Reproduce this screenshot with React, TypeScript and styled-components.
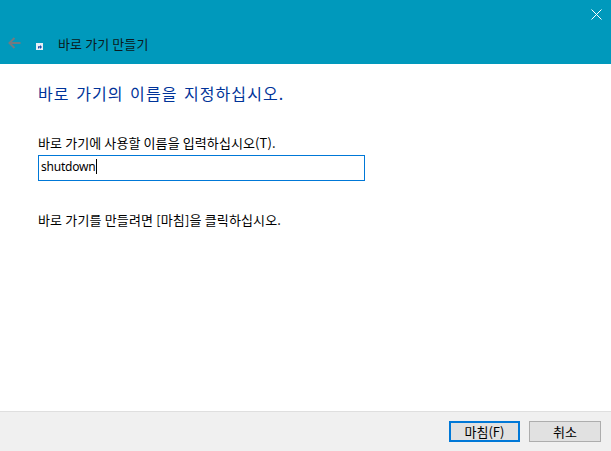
import { createGlobalStyle } from "styled-components";
import styled from "styled-components";

const GlobalStyle = createGlobalStyle`
  html, body {
    margin: 0;
    padding: 0;
    background: #ffffff;
  }
  * {
    box-sizing: border-box;
  }
`;

const Window = styled.div`
  width: 611px;
  height: 451px;
  display: flex;
  flex-direction: column;
  overflow: hidden;
  font-family: "Noto Sans CJK KR", "Liberation Sans", sans-serif;
  font-size: 13px;
  color: #000000;
  background: #ffffff;
`;

const TitleBar = styled.header`
  height: 64px;
  flex: none;
  display: flex;
  flex-direction: column;
  background: #0099bc;
`;

const CloseRow = styled.div`
  height: 30px;
  display: flex;
  justify-content: flex-end;
  padding: 9px 9px 0 0;
`;

const NavRow = styled.div`
  display: flex;
  align-items: center;
  height: 28px;
  padding-left: 8px;
`;

const BackIcon = styled.svg`
  width: 13px;
  height: 12px;
  margin-right: 15px;
  margin-bottom: 2px;
`;

const AppIcon = styled.svg`
  width: 7px;
  height: 7px;
  margin-top: 5px;
  margin-right: 15px;
`;

const TitleText = styled.span`
  font-size: 13px;
  line-height: 16px;
  letter-spacing: 0.1px;
  color: #0a1a20;
`;

const Body = styled.main`
  flex: 1;
  display: flex;
  flex-direction: column;
  padding: 18px 0 0 38px;
`;

const Heading = styled.h1`
  margin: 0 0 30px;
  font-size: 16px;
  font-weight: 400;
  line-height: 22px;
  letter-spacing: 1.05px;
  word-spacing: 2px;
  color: #003399;
`;

const FieldLabel = styled.label`
  display: block;
  line-height: 17px;
  letter-spacing: 0.1px;
  margin-bottom: 4px;
`;

const NameBox = styled.div`
  width: 327px;
  height: 26px;
  display: flex;
  align-items: center;
  padding: 0 0 3px 2px;
  border: 1px solid #0078d7;
  font-family: "Noto Sans", "Liberation Sans", sans-serif;
  font-size: 12px;
  letter-spacing: -0.2px;
`;

const Caret = styled.span`
  width: 1px;
  height: 15px;
  background: #000000;
`;

const Hint = styled.p`
  margin: 30px 0 0;
  line-height: 17px;
  letter-spacing: 0.15px;
`;

const Footer = styled.footer`
  height: 40px;
  flex: none;
  display: flex;
  justify-content: flex-end;
  align-items: center;
  gap: 9px;
  padding-right: 10px;
  background: #f0f0f0;
  border-top: 1px solid #dfdfdf;
`;

const DialogButton = styled.button<{ $primary?: boolean }>`
  width: ${(p) => (p.$primary ? 71 : 72)}px;
  height: 21px;
  padding: 0;
  font-family: inherit;
  font-size: 13px;
  line-height: 17px;
  color: #000000;
  background: #e1e1e1;
  border: ${(p) => (p.$primary ? "2px solid #0078d7" : "1px solid #adadad")};
`;

export default function App() {
  return (
    <Window>
      <GlobalStyle />
      <TitleBar>
        <CloseRow>
          <svg width="11" height="11" viewBox="0 0 11 11">
            <path d="M.5.5l10 10M10.5.5l-10 10" stroke="#ffffff" strokeWidth="1" fill="none" />
          </svg>
        </CloseRow>
        <NavRow>
          <BackIcon viewBox="0 0 13 12">
            <path d="M12.5 6H1.5M6.5 1L1.5 6l5 5" stroke="#737a80" strokeWidth="2" fill="none" />
          </BackIcon>
          <AppIcon viewBox="0 0 7 7">
            <rect width="7" height="7" fill="#e8eef6" />
            <path d="M2 5.5V3.2h2V2l2 2-2 2V4.6H3.2v1z" fill="#1d4fa8" />
          </AppIcon>
          <TitleText>바로 가기 만들기</TitleText>
        </NavRow>
      </TitleBar>
      <Body>
        <Heading>바로 가기의 이름을 지정하십시오.</Heading>
        <FieldLabel>바로 가기에 사용할 이름을 입력하십시오(T).</FieldLabel>
        <NameBox>
          shutdown
          <Caret />
        </NameBox>
        <Hint>바로 가기를 만들려면 [마침]을 클릭하십시오.</Hint>
      </Body>
      <Footer>
        <DialogButton $primary>마침(F)</DialogButton>
        <DialogButton>취소</DialogButton>
      </Footer>
    </Window>
  );
}
